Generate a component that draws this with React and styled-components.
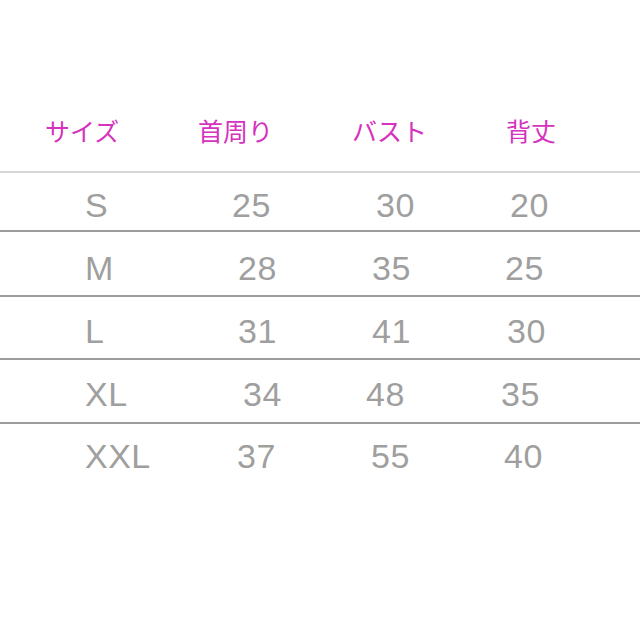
import React from 'react'
import styled, {createGlobalStyle} from 'styled-components'

const Global = createGlobalStyle`
  html, body {
    margin: 0;
    padding: 0;
    background: #fff;
  }
`

const Page = styled.div`
  width: 640px;
  height: 640px;
  box-sizing: border-box;
  padding-top: 100px;
  background: #fff;
  overflow: hidden;
`

const Grid = `
  display: grid;
  grid-template-columns: 40px 150px 155px 150px 1fr;
  align-items: center;
  box-sizing: border-box;
`

const HeadRow = styled.div`
  ${Grid}
  height: 73px;
  padding-bottom: 10px;
  border-bottom: 2px solid #d8d8d8;
`

const Row = styled.div`
  ${Grid}
  height: ${p => p.h}px;
  padding-top: ${p => p.pt}px;
  border-bottom: ${p => (p.last ? 'none' : '2px solid #9c9c9c')};
`

const HeadCell = styled.div`
  grid-column: ${p => p.col + 1};
  padding-left: ${p => p.dx}px;
  font-family: "Noto Sans CJK JP", "Noto Sans", sans-serif;
  font-size: 25px;
  line-height: 1;
  color: #d532bd;
  white-space: nowrap;
`

const Cell = styled.div`
  grid-column: ${p => p.col + 1};
  padding-left: ${p => p.dx}px;
  font-family: "Liberation Sans", Arial, sans-serif;
  font-size: 34px;
  line-height: 1;
  letter-spacing: 0.5px;
  color: #9f9f9f;
  white-space: nowrap;
`

const heads = [
  {t: 'サイズ', dx: 5},
  {t: '首周り', dx: 8},
  {t: 'バスト', dx: 7},
  {t: '背丈', dx: 11},
]

// [size, neck, bust, length] with the small x shifts seen in the original
const rows = [
  {h: 59, pt: 7, cells: [['S', 45], ['25', 42], ['30', 31], ['20', 15]]},
  {h: 65, pt: 8, cells: [['M', 45], ['28', 48], ['35', 27], ['25', 10]]},
  {h: 63, pt: 7, cells: [['L', 45], ['31', 48], ['41', 27], ['30', 12]]},
  {h: 64, pt: 5, cells: [['XL', 45], ['34', 53], ['48', 21], ['35', 6]]},
  {h: 62, pt: 1, cells: [['XXL', 45], ['37', 47], ['55', 26], ['40', 9]], last: true},
]

export default function App() {
  return (
    <Page>
      <Global />
      <HeadRow>
        {heads.map((h, i) => (
          <HeadCell key={h.t} col={i + 1} dx={h.dx}>{h.t}</HeadCell>
        ))}
      </HeadRow>
      {rows.map((r, ri) => (
        <Row key={ri} h={r.h} pt={r.pt} last={r.last}>
          {r.cells.map(([v, dx], ci) => (
            <Cell key={ci} col={ci + 1} dx={dx}>{v}</Cell>
          ))}
        </Row>
      ))}
    </Page>
  )
}
